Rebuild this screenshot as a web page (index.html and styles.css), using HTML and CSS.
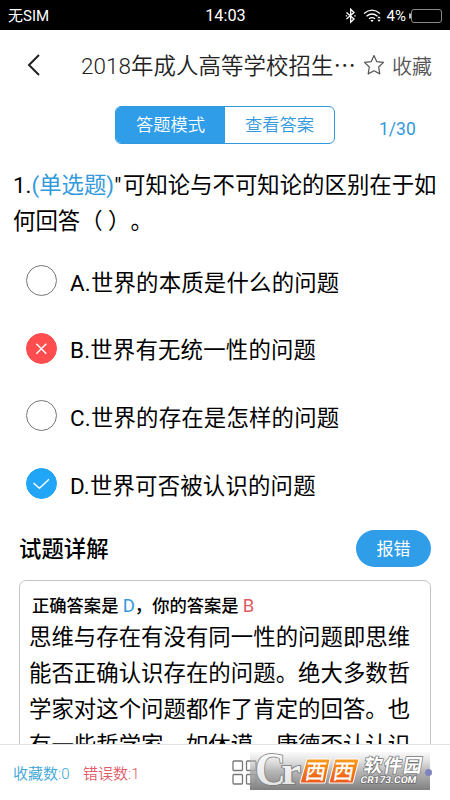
FILE: index.html
```html
<!DOCTYPE html>
<html lang="zh-CN">
<head>
<meta charset="utf-8">
<title>答题模式</title>
<link rel="stylesheet" href="styles.css">
</head>
<body>
<div class="screen">
  <header class="status">
    <span class="carrier">无SIM</span>
    <span class="clock">14:03</span>
    <div class="signals">
      <svg width="12" height="16" viewBox="0 0 12 16" fill="none" stroke="#fff" stroke-width="1.3"><path d="M1.5 4.5 9 11 5.7 14.3V1.2L9 4.5 1.5 11"/><path d="M.8 7.8h1.4M9.3 7.8h1.4"/></svg>
      <svg class="wifi" width="20" height="14" viewBox="0 0 20 14" fill="none" stroke="#fff" stroke-width="1.4"><path d="M1 4.5Q9 -2.2 17 4.5M3.5 7.2Q9 2.8 14.5 7.2M6 9.7Q9 7.5 12 9.7"/><path d="M7.3 11 9 13l1.7-2z" fill="#fff" stroke="none"/><path d="m14.3 9.2 1.7-2 1.7 2zM14.3 10.7l1.7 2 1.7-2z" fill="#fff" stroke="none"/></svg>
      <span class="percent">4%</span>
      <svg width="34" height="14" viewBox="0 0 34 14" fill="none"><rect x="2.5" y=".5" width="30" height="13" rx="2.5" stroke="#8b8b8b"/><path d="M1 4.5v5" stroke="#fff" stroke-width="1.5"/></svg>
    </div>
  </header>

  <nav class="titlebar">
    <svg class="back" width="14" height="22" viewBox="0 0 14 22" fill="none" stroke="#222" stroke-width="2"><path d="M12 1 2 11l10 10"/></svg>
    <h1>2018年成人高等学校招生<span class="dots">⋯</span></h1>
    <svg class="star" width="22" height="22" viewBox="0 0 22 22" fill="none" stroke="#555" stroke-width="1.2" stroke-linejoin="round"><path d="m11 1.500 2.700 6.100 6.800.8-4.800 4.600 1.100 6.900-5.800-3.100-5.800 3.100 1.100-6.900L1.500 8.400l6.800-.8z"/></svg>
    <span class="fav">收藏</span>
  </nav>

  <section class="modes">
    <div class="tabs"><span class="tab active">答题模式</span><span class="tab">查看答案</span></div>
    <span class="progress">1/30</span>
  </section>

  <main>
    <p class="question"><span class="lead">1.<span class="kind">(单选题)</span>"</span>可知论与不可知论的区别在于如<br>何回答（ ）。</p>
    <ul class="options">
      <li><i class="mark"></i><span>A.世界的本质是什么的问题</span></li>
      <li><i class="mark wrong"><svg width="30" height="30" viewBox="0 0 30 30" fill="none" stroke="#fff" stroke-width="1.5"><path d="m9.300 9.800 10 10m0-10-10 10"/></svg></i><span>B.世界有无统一性的问题</span></li>
      <li><i class="mark"></i><span>C.世界的存在是怎样的问题</span></li>
      <li><i class="mark right"><svg width="30" height="30" viewBox="0 0 30 30" fill="none" stroke="#fff" stroke-width="1.5"><path d="m6.500 14 6 5.300 9.500-9"/></svg></i><span>D.世界可否被认识的问题</span></li>
    </ul>
    <div class="detail-head"><h2>试题详解</h2><span class="report">报错</span></div>
    <div class="detail">
      <p class="result">正确答案是 <b class="blue">D</b>，你的答案是 <b class="red">B</b></p>
      <p class="explain">思维与存在有没有同一性的问题即思维<br>能否正确认识存在的问题。绝大多数哲<br>学家对这个问题都作了肯定的回答。也<br>有一些哲学家，如休谟、康德否认认识</p>
    </div>
  </main>

  <footer>
    <span class="saved">收藏数:0</span><span class="errors">错误数:1</span>
    <svg class="grid" width="26" height="26" viewBox="0 0 26 26" fill="none" stroke="#777" stroke-width="1.3"><rect x="1" y="1" width="9.500" height="9.500" rx="1"/><rect x="14.500" y="1" width="9.500" height="9.500" rx="1"/><rect x="1" y="14.500" width="9.500" height="9.500" rx="1"/><rect x="14.500" y="14.500" width="9.500" height="9.500" rx="1"/></svg>
    <i class="dot"></i>
  </footer>

  <svg class="watermark" width="182" height="42" viewBox="0 0 182 42">
    <defs>
      <linearGradient id="plate" x2="0" y2="1"><stop stop-color="#ccc" stop-opacity=".1"/><stop offset=".5" stop-color="#aaa" stop-opacity=".85"/><stop offset="1" stop-color="#808080"/></linearGradient>
      <linearGradient id="orange" x2="0" y2="1"><stop stop-color="#fa9c1b"/><stop offset="1" stop-color="#ed571b"/></linearGradient>
      <linearGradient id="silver" x2="0" y2="1"><stop stop-color="#fff"/><stop offset="1" stop-color="#dedede"/></linearGradient>
    </defs>
    <path fill="url(#plate)" d="M2 4h180v38H2z"/>
    <text class="logo" fill="url(#silver)" stroke="#777" stroke-width="1.6" paint-order="stroke" x="7" y="37" font-size="46" textLength="31" lengthAdjust="spacingAndGlyphs">C</text>
    <text class="logo" fill="url(#silver)" stroke="#777" stroke-width="1.6" paint-order="stroke" x="33" y="36" font-size="38" textLength="20" lengthAdjust="spacingAndGlyphs">r</text>
    <path d="M59 11h23l-5 24H52zM87 11h24l-6 24H81z" fill="url(#orange)" stroke="#fff"/>
    <g class="cn glyph" fill="#fff"><text transform="translate(56 31) skewX(-10)" font-size="21">西</text><text transform="translate(84 31) skewX(-10)" font-size="21">西</text></g>
    <text class="cn" transform="translate(115 24) skewX(-10)" font-size="18.500" textLength="58" fill="#fff" stroke="#777" stroke-width="1.500" paint-order="stroke">软件园</text>
    <text class="site" transform="translate(112 35) skewX(-10)" font-size="9.500" textLength="56" lengthAdjust="spacingAndGlyphs" fill="#fff" stroke="#666" stroke-width="1.300" paint-order="stroke">CR173.COM</text>
  </svg>
</div>
</body>
</html>
```
FILE: styles.css
```css
* { box-sizing: border-box; margin: 0; padding: 0; }
body { background: #fff; color: #111; font-family: Roboto, "Noto Sans CJK SC", sans-serif; text-spacing-trim: space-all; }
.screen { position: relative; display: flex; flex-direction: column; width: 450px; height: 800px; overflow: hidden; white-space: nowrap; }
.status { display: grid; grid-template-columns: 1fr 50px 1fr; align-items: center; flex: none; height: 30px; padding: 2px 7px 0 8px; background: #000; color: #fff; font-size: 15px; line-height: 20px; }
.clock { font-size: 16.3px; text-align: center; }
.signals { display: flex; align-items: center; justify-content: flex-end; }
.wifi { margin-left: 6px; }
.percent { margin: 0 3px 0 4px; }
.titlebar { display: flex; align-items: center; flex: none; height: 70px; padding: 0 18px 0 27px; }
.back { margin: 0 40px 0 0; }
h1 { width: 282px; font-size: 22.4px; font-weight: 350; line-height: 34px; letter-spacing: .1px; color: #222; }
.dots { font-family: "Noto Sans CJK SC", sans-serif; }
.star { margin: 0 7px 0 0; flex: none; }
.fav { font-size: 20px; font-weight: 350; color: #555; }
.modes { display: flex; flex: none; height: 67px; padding: 6px 0 0 115px; color: #3399dc; }
.tabs { display: flex; width: 220px; height: 38px; overflow: hidden; border: 1px solid #3399dc; border-radius: 6px; }
.tab { flex: 1; font-size: 17.3px; line-height: 37px; text-align: center; font-weight: 350; }
.tab.active { background: #2f9de8; color: #fff; }
.progress { margin: 11px 0 0 44px; font-size: 17.5px; line-height: 24px; }
main { flex: none; height: 577px; overflow: hidden; }
.question { height: 80px; padding-left: 13px; font-size: 22.4px; line-height: 36px; color: #000; }
.lead { display: inline-block; width: 110px; }
.kind { color: #3399dc; }
.options { list-style: none; }
.options li { display: flex; align-items: center; gap: 13px; height: 67.6px; padding-left: 26px; font-size: 22.4px; letter-spacing: .2px; color: #000; }
.mark { flex: none; width: 31px; height: 31px; border: 1px solid #777; border-radius: 50%; }
.wrong { border-color: #ff4d4f; background: #ff4d4f; }
.right { border-color: #20a5f7; background: #20a5f7; }
.mark svg { display: block; }
.detail-head { display: flex; align-items: center; justify-content: space-between; height: 63px; padding: 0 19px; }
h2 { font-size: 22.4px; font-weight: 500; line-height: 34px; color: #000; }
.report { width: 75px; height: 37px; border-radius: 19px; background: #2f9de8; color: #fff; font-size: 17px; line-height: 38px; text-align: center; }
.detail { height: 240px; margin: 0 19px; padding: 12px 0 0 9px; border: 1px solid #c4c4c4; border-radius: 7px; color: #000; }
.result { padding-left: 3px; font-size: 17.3px; font-weight: 500; line-height: 26px; }
.result b { font-weight: 400; font-size: 18.5px; }
.blue { color: #3399dc; }
.red { color: #e05a60; }
.explain { font-size: 22.4px; line-height: 36px; letter-spacing: .03px; }
footer { display: flex; align-items: center; flex: none; height: 56px; padding: 0 18px 0 13px; border-top: 1px solid #e2e2e2; background: #fff; font-size: 15px; font-weight: 350; }
.saved { width: 70px; color: #38a5d6; }
.errors { width: 149px; color: #e05a68; }
.dot { position: relative; z-index: 1; width: 7px; height: 7px; margin-left: auto; border-radius: 50%; background: #8183bd; }
.watermark { position: absolute; left: 248px; top: 748px; }
.logo { font-family: "Liberation Serif", serif; font-weight: 700; }
.cn { font-family: "Noto Sans CJK SC", sans-serif; font-weight: 700; }
.glyph { font-weight: 500; }
.site { font-family: Roboto, sans-serif; font-weight: 700; }
```
